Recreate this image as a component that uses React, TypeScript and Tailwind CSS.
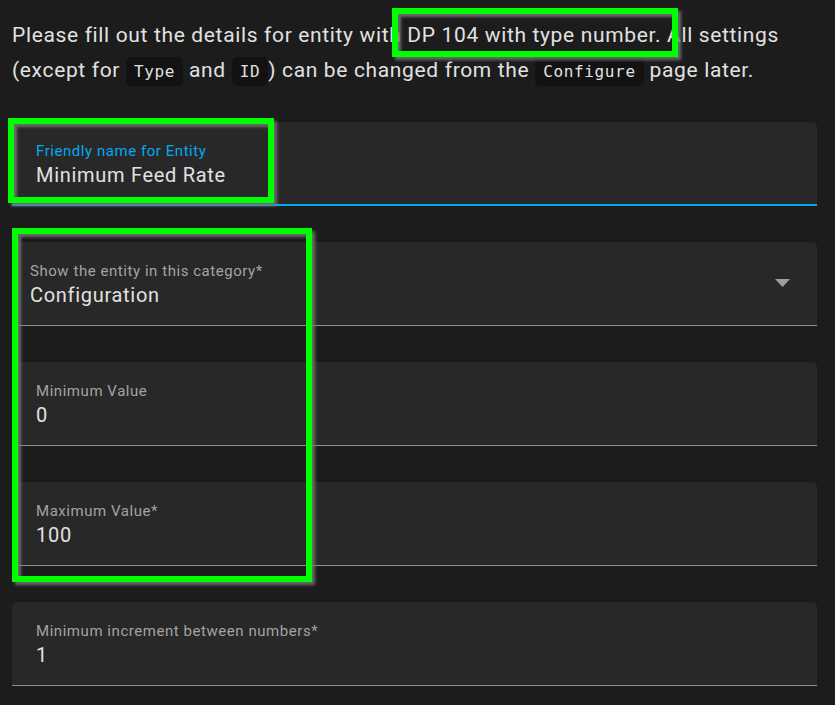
import React from "react";

const mark =
  "pointer-events-none absolute border-[6px] border-[#00ff00] shadow-[3px_3px_3px_rgba(120,120,120,0.85),inset_3px_3px_3px_rgba(120,120,120,0.85)]";

function Code({ children }: { children: React.ReactNode }) {
  return (
    <code className="rounded-[5px] bg-[#121212] px-[8px] py-[5px] font-['DejaVu_Sans_Mono',monospace] text-[16px] text-[#e1e1e1]">
      {children}
    </code>
  );
}

function Field({
  label,
  value,
  focused,
  select,
}: {
  label: string;
  value: string;
  focused?: boolean;
  select?: boolean;
}) {
  return (
    <div
      className={[
        "flex h-[84px] items-center justify-between rounded-t-[5px] bg-[#282828]",
        focused ? "border-b-2 border-[#03a9f4]" : "border-b border-[#8c8c8c]",
        select ? "pl-[18px] pr-[27px]" : "pl-[24px]",
      ].join(" ")}
    >
      <div className="self-start pt-[19px]">
        <p
          className={`text-[15px] leading-[20px] tracking-[0.55px] ${
            focused ? "text-[#03a9f4]" : "text-[#a3a3a3]"
          }`}
        >
          {label}
        </p>
        <p className="text-[20px] leading-[28px] tracking-[0.7px] text-[#e1e1e1]">{value}</p>
      </div>
      {select && (
        <svg width="15" height="8" viewBox="0 0 15 8" className="mt-[-2px]">
          <path d="M0 0h15L7.5 8z" fill="#9e9e9e" />
        </svg>
      )}
    </div>
  );
}

export default function App() {
  return (
    <div className="relative h-[705px] w-[835px] overflow-hidden bg-[#1c1c1c] pl-[12px] pr-[18px] font-['Roboto',sans-serif]">
      <p className="mt-[18px] whitespace-nowrap text-[21px] leading-[35px] tracking-[0.65px] text-[#e1e1e1]">
        Please fill out the details for entity with DP 104 with type number. All settings
        <br />
        (except for <Code>Type</Code> and <Code>ID</Code>) can be changed from the <Code>Configure</Code> page later.
      </p>

      <div className="mt-[33px] flex flex-col gap-[36px]">
        <Field label="Friendly name for Entity" value="Minimum Feed Rate" focused />
        <Field label="Show the entity in this category*" value="Configuration" select />
        <Field label="Minimum Value" value="0" />
        <Field label="Maximum Value*" value="100" />
        <Field label="Minimum increment between numbers*" value="1" />
      </div>

      {/* annotation highlights */}
      <div className={`${mark} left-[392px] top-[8px] h-[49px] w-[286px]`} />
      <div className={`${mark} left-[8px] top-[118px] h-[85px] w-[266px]`} />
      <div className={`${mark} left-[12px] top-[228px] h-[354px] w-[300px]`} />
    </div>
  );
}
